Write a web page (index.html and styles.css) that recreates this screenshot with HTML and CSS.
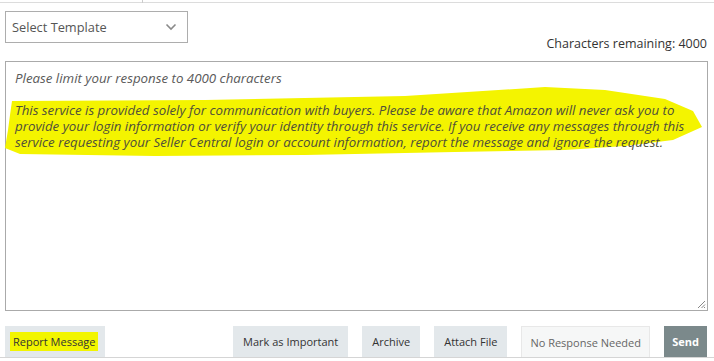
FILE: index.html
```html
<!DOCTYPE html>
<html lang="en">
<head>
<meta charset="utf-8">
<title>Message</title>
<link rel="stylesheet" href="styles.css">
</head>
<body>
<div class="topline"><span class="tick"></span></div>
<div class="header">
  <div class="select">
    <span>Select Template</span>
    <svg class="chev" width="12" height="8" viewBox="0 0 12 8"><path d="M1.5 1.5 L6 6 L10.5 1.5" fill="none" stroke="#8a8a8a" stroke-width="1.6"/></svg>
  </div>
  <div class="counter">Characters remaining: 4000</div>
</div>
<div class="box">
  <svg class="blob" width="703" height="250" viewBox="0 0 703 250">
    <path d="M7 40 L200 39 L400 35 L540 26 L600 29 L660 38 L688 50 L697 66 L668 79 L620 85 L560 89 L450 91 L300 94 L150 95 L15 93 L0 87 L3 69 L5 54 Z" fill="#f4f400"/>
  </svg>
  <p class="txt">Please limit your response to 4000 characters</p>
  <p class="txt notice">This service is provided solely for communication with buyers. Please be aware that Amazon will never ask you to provide your login information or verify your identity through this service. If you receive any messages through this service requesting your Seller Central login or account information, report the message and ignore the request.</p>
  <svg class="grip" width="9" height="9" viewBox="0 0 9 9"><path d="M8 1 L1 8 M8 4.5 L4.5 8 M8 7 L7 8" stroke="#888" stroke-width="1"/></svg>
</div>
<div class="actions">
  <button class="btn report"><span class="hl">Report Message</span></button>
  <div class="group">
    <button class="btn">Mark as Important</button>
    <button class="btn">Archive</button>
    <button class="btn">Attach File</button>
    <button class="btn light">No Response Needed</button>
    <button class="btn send">Send</button>
  </div>
</div>
</body>
</html>
```
FILE: styles.css
```css
* { box-sizing: border-box; }
body {
  margin: 0;
  width: 714px;
  height: 361px;
  overflow: hidden;
  background: #fff;
  font-family: "Open Sans", "Noto Sans", sans-serif;
  color: #333;
}
.topline {
  height: 3px;
  border-bottom: 1px solid #dcdcdc;
  position: relative;
}
.tick {
  position: absolute;
  left: 142px;
  top: 0;
  width: 1px;
  height: 3px;
  background: #ccc;
}
.header {
  display: flex;
  justify-content: space-between;
  align-items: flex-end;
  padding: 0 7px 0 5px;
}
.select {
  margin-top: 8px;
  margin-bottom: 10px;
  width: 183px;
  height: 32px;
  border: 1px solid #adadad;
  display: flex;
  align-items: center;
  justify-content: space-between;
  padding: 0 10px 1px 6px;
  font-size: 12.8px;
  color: #555;
}
.chev { margin-top: 1px; }
.counter {
  font-size: 12.5px;
  line-height: 18px;
  color: #333;
}
.box {
  position: relative;
  margin: 8px 0 0 5px;
  width: 703px;
  height: 250px;
  border: 1px solid #aaa;
  padding: 8px 12px 0 9px;
}
.blob {
  position: absolute;
  left: -1px;
  top: -1px;
}
.txt {
  position: relative;
  margin: 0 0 15.5px;
  font-size: 13.3px;
  line-height: 16.3px;
  font-style: italic;
  color: #5a5a5a;
}
.notice { color: #4f4f3a; }
.grip {
  position: absolute;
  right: 1px;
  bottom: 1px;
}
.actions {
  margin-top: 15px;
  display: flex;
  justify-content: space-between;
  padding: 0 7px 0 5px;
  border-bottom: 1px solid #d5d5d5;
}
.group {
  display: flex;
  gap: 14px;
}
.btn {
  height: 31px;
  border: none;
  background: #e3e8eb;
  font-family: "Open Sans", "Noto Sans", sans-serif;
  font-size: 11px;
  color: #333;
  padding: 0 10px;
  margin: 0;
  white-space: nowrap;
}
.report { width: 100px; padding: 0 0 0 8px; text-align: left; }
.hl {
  background: #f2f500;
  padding: 2px 3px;
  margin-left: -3px;
}
.light {
  background: #f6f7f7;
  border: 1px solid #e8e8e8;
  border-bottom: none;
  color: #666;
  padding: 0 8px;
}
.send {
  background: #7b898b;
  color: #fff;
  font-weight: 700;
  width: 43px;
  padding: 0;
}
```
